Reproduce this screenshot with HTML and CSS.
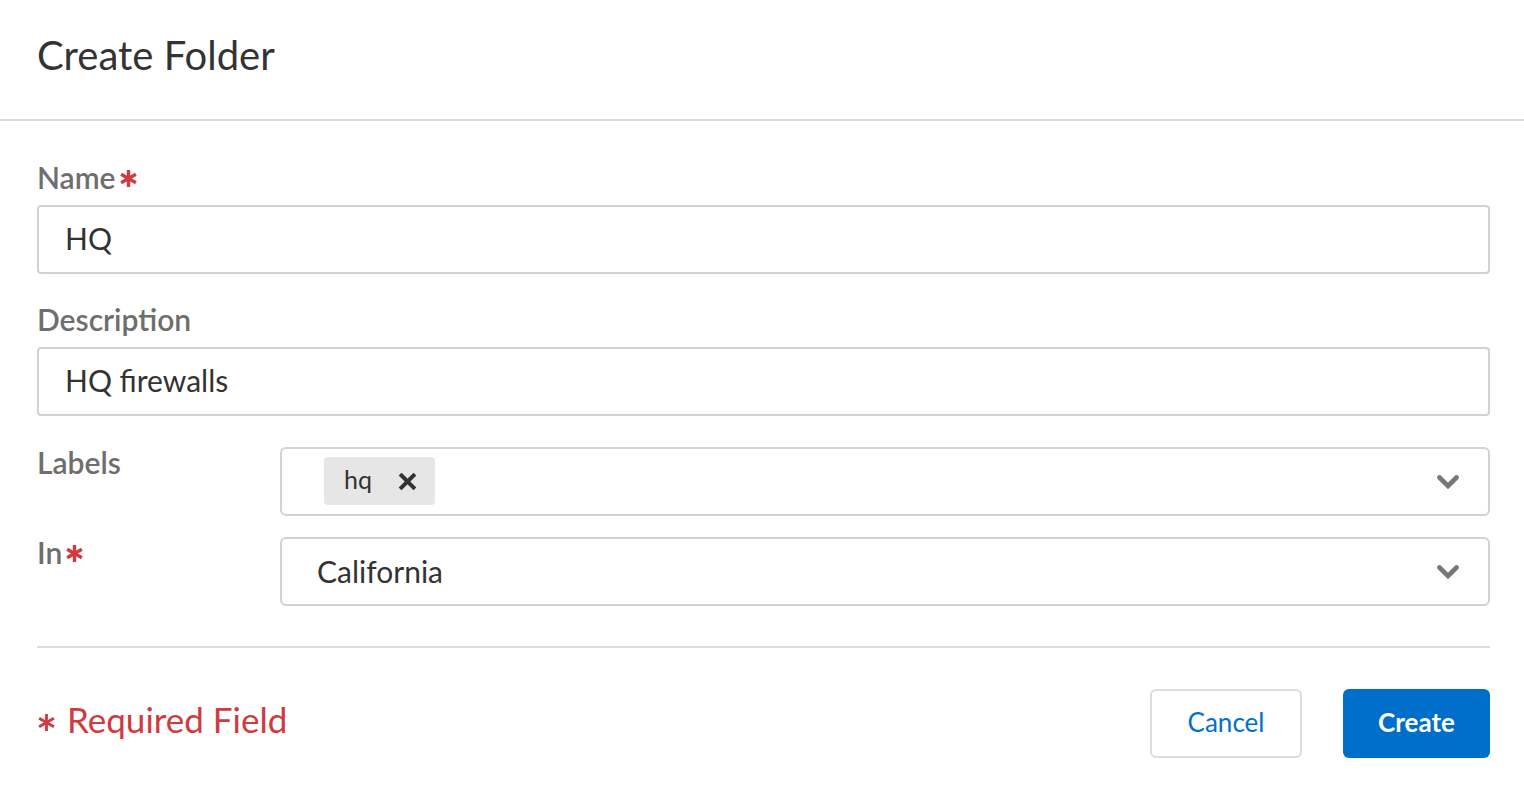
FILE: index.html
```html
<!DOCTYPE html>
<html lang="en">
<head>
<meta charset="utf-8">
<title>Create Folder</title>
<link rel="stylesheet" href="styles.css">
</head>
<body>
<div class="dialog">
  <header class="hdr">
    <h1 class="title">Create Folder</h1>
  </header>
  <div class="content">
    <div class="field">
      <label class="lbl">Name<svg class="req" viewBox="0 0 20 20"><g stroke="#d13a3f" stroke-width="3.6"><line x1="10" y1="1" x2="10" y2="19"/><line x1="2.2" y1="5.5" x2="17.8" y2="14.5"/><line x1="2.2" y1="14.5" x2="17.8" y2="5.5"/></g></svg></label>
      <div class="input">HQ</div>
    </div>
    <div class="field field-desc">
      <label class="lbl">Description</label>
      <div class="input">HQ firewalls</div>
    </div>
    <div class="row row-labels">
      <label class="lbl side">Labels</label>
      <div class="select select-tags">
        <span class="chip"><span class="chip-text">hq</span><svg class="chip-x" viewBox="0 0 19 19"><g stroke="#333" stroke-width="4" stroke-linecap="square"><line x1="3.5" y1="3.5" x2="15.5" y2="15.5"/><line x1="15.5" y1="3.5" x2="3.5" y2="15.5"/></g></svg></span>
        <svg class="chev" viewBox="0 0 22 14"><polyline points="2.5,2.5 11,11 19.5,2.5" fill="none" stroke="#777" stroke-width="4.6" stroke-linecap="round" stroke-linejoin="miter"/></svg>
      </div>
    </div>
    <div class="row row-in">
      <label class="lbl side">In<svg class="req" viewBox="0 0 20 20"><g stroke="#d13a3f" stroke-width="3.6"><line x1="10" y1="1" x2="10" y2="19"/><line x1="2.2" y1="5.5" x2="17.8" y2="14.5"/><line x1="2.2" y1="14.5" x2="17.8" y2="5.5"/></g></svg></label>
      <div class="select select-value">
        <span class="value">California</span>
        <svg class="chev" viewBox="0 0 22 14"><polyline points="2.5,2.5 11,11 19.5,2.5" fill="none" stroke="#777" stroke-width="4.6" stroke-linecap="round" stroke-linejoin="miter"/></svg>
      </div>
    </div>
    <div class="divider"></div>
    <div class="footer">
      <div class="required"><svg class="req-foot" viewBox="0 0 20 20"><g stroke="#d13a3f" stroke-width="3"><line x1="10" y1="1" x2="10" y2="19"/><line x1="2.2" y1="5.5" x2="17.8" y2="14.5"/><line x1="2.2" y1="14.5" x2="17.8" y2="5.5"/></g></svg><span>Required Field</span></div>
      <div class="actions">
        <button class="btn btn-cancel">Cancel</button>
        <button class="btn btn-create">Create</button>
      </div>
    </div>
  </div>
</div>
</body>
</html>
```
FILE: styles.css
```css
* { box-sizing: border-box; }
html, body { margin: 0; padding: 0; background: #fff; }
body { font-family: Lato, "Open Sans", "Liberation Sans", sans-serif; color: #333; }

.hdr {
  height: 121px;
  border-bottom: 2px solid #dcdcdc;
  padding: 31px 37px 0;
}
.title {
  margin: 0;
  font-size: 40px;
  font-weight: 400;
  line-height: 48px;
  color: #333;
}

.content {
  display: flex;
  flex-direction: column;
  padding: 38px 34px 0 37px;
}

.field-desc { margin-top: 27px; }
.lbl {
  display: flex;
  align-items: center;
  font-size: 30px;
  font-weight: 600;
  line-height: 36px;
  color: #6e6e6e;
  margin-bottom: 10px;
}
.req { width: 19px; height: 19px; margin-left: 3px; margin-top: 2px; }

.input {
  height: 69px;
  border: 2px solid #d2d2d2;
  border-radius: 4px;
  display: flex;
  align-items: center;
  padding: 0 0 4px 26px;
  font-size: 30px;
  color: #333;
}

.row { display: flex; align-items: flex-start; }
.row-labels { margin-top: 31px; }
.row-in { margin-top: 21px; }
.lbl.side { width: 243px; flex: none; margin: -3px 0 0; }

.select {
  flex: 1;
  height: 69px;
  border: 2px solid #d2d2d2;
  border-radius: 6px;
  display: flex;
  align-items: center;
  padding-right: 29px;
}
.select-tags { padding-left: 42px; }
.select-value { padding-left: 35px; }
.value { font-size: 30px; color: #333; margin-top: -1px; }
.chev { width: 22px; height: 14px; margin-left: auto; }

.chip {
  display: flex;
  align-items: center;
  height: 48px;
  margin-top: -1px;
  background: #e6e6e6;
  border-radius: 4px;
  padding: 0 18px 0 20px;
}
.chip-text { font-size: 25px; color: #333; margin-top: -4px; }
.chip-x { width: 19px; height: 19px; margin-left: 26px; }

.divider { height: 2px; background: #dcdcdc; margin-top: 40px; }

.footer {
  display: flex;
  align-items: center;
  justify-content: space-between;
  padding-top: 41px;
}
.required {
  display: flex;
  align-items: center;
  color: #d13a3f;
  font-size: 35px;
  margin-bottom: 10px;
}
.req-foot { width: 19px; height: 19px; margin: 8px 11px 0 0; }

.actions { display: flex; gap: 41px; }
.btn {
  height: 69px;
  padding: 0 0 3px;
  border-radius: 6px;
  font-family: Lato, "Open Sans", "Liberation Sans", sans-serif;
  font-size: 26px;
  cursor: pointer;
}
.btn-cancel {
  width: 152px;
  background: #fff;
  border: 2px solid #dcdcdc;
  color: #0070cc;
}
.btn-create {
  width: 147px;
  background: #006fcc;
  border: 0;
  color: #fff;
  font-weight: 700;
}
```
